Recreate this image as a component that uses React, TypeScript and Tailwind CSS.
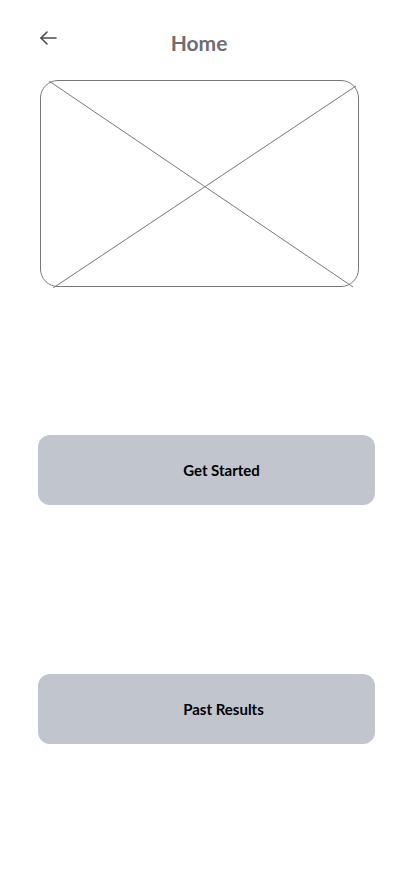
import React from "react";

export default function App() {
  return (
    <div className="w-[412px] h-[870px] bg-white flex flex-col" style={{ fontFamily: "Lato, 'Open Sans', sans-serif" }}>
      <div className="relative h-[80px] flex items-start">
        <svg className="absolute left-[39px] top-[30px]" width="18" height="16" viewBox="0 0 18 16" fill="none" stroke="#4b4b4b" strokeWidth="1.6" strokeLinecap="round" strokeLinejoin="round">
          <path d="M17 8H2" />
          <path d="M8 2L2 8l6 6" />
        </svg>
        <div className="w-full pt-[28px] text-center">
          <span className="ml-[-14px] text-[21px] leading-[29px] font-bold text-[#6e6e6e]">Home</span>
        </div>
      </div>
      <div className="relative ml-[40px] w-[319px] h-[207px] rounded-[18px] border border-[#777]">
        <svg className="absolute inset-0" width="319" height="207" viewBox="0 0 319 207" fill="none" stroke="#777" strokeWidth="1">
          <line x1="8" y1="0" x2="312" y2="206" />
          <line x1="12" y1="207" x2="315" y2="5" />
        </svg>
      </div>
      <button className="mt-[148px] ml-[38px] w-[337px] h-[70px] rounded-[12px] bg-[#c1c5ce] flex items-center justify-center pl-[30px] text-[15px] font-bold text-black">
        Get Started
      </button>
      <button className="mt-[169px] ml-[38px] w-[337px] h-[70px] rounded-[12px] bg-[#c1c5ce] flex items-center justify-center pl-[34px] text-[15px] font-bold text-black">
        Past Results
      </button>
    </div>
  );
}
